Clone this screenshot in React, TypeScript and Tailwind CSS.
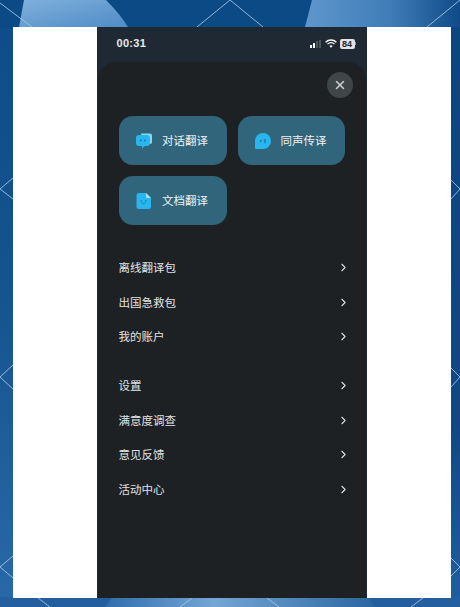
import { ChevronRight, X } from 'lucide-react';

const GROUP_ONE = ['离线翻译包', '出国急救包', '我的账户'];
const GROUP_TWO = ['设置', '满意度调查', '意见反馈', '活动中心'];

function Backdrop() {
  return (
    <svg className="absolute inset-0" width="460" height="607" viewBox="0 0 460 607">
      <defs>
        <linearGradient id="patchLeft" x1="0" y1="0" x2="1" y2="1">
          <stop offset="0" stopColor="#7fb0dc" />
          <stop offset="1" stopColor="#4f8cc6" />
        </linearGradient>
        <linearGradient id="patchRight" x1="0" y1="0" x2="1" y2="0">
          <stop offset="0" stopColor="#5f97cc" />
          <stop offset="0.55" stopColor="#3f7cb8" />
          <stop offset="1" stopColor="#0f4b88" />
        </linearGradient>
        <linearGradient id="patchBottom" x1="0" y1="0" x2="1" y2="0">
          <stop offset="0" stopColor="#2f6dab" />
          <stop offset="0.4" stopColor="#74a6d6" />
          <stop offset="1" stopColor="#2a659f" />
        </linearGradient>
        <linearGradient id="stripLeft" x1="0" y1="0" x2="0" y2="1">
          <stop offset="0" stopColor="#0f4b8a" />
          <stop offset="0.5" stopColor="#15548f" />
          <stop offset="1" stopColor="#2a69a8" />
        </linearGradient>
        <linearGradient id="stripRight" x1="0" y1="0" x2="0" y2="1">
          <stop offset="0" stopColor="#0c4580" />
          <stop offset="0.7" stopColor="#0e4985" />
          <stop offset="1" stopColor="#205f9e" />
        </linearGradient>
      </defs>
      <rect width="230" height="607" fill="url(#stripLeft)" />
      <rect x="230" width="230" height="607" fill="url(#stripRight)" />
      <rect width="460" height="28" fill="#0c4a86" />
      <path d="M24 0 L106 0 Q120 14 128 27 L19 27 Z" fill="url(#patchLeft)" />
      <path d="M312 0 L460 0 L460 27 L305 27 Z" fill="url(#patchRight)" />
      <rect y="597" width="460" height="10" fill="#235f9e" />
      <path d="M105 607 L112 598 L368 598 L376 607 Z" fill="url(#patchBottom)" />
      <g stroke="#a9c8e8" strokeWidth="1" fill="none" opacity="0.85">
        <path d="M0 3 L32 27" />
        <path d="M197 27 L230 0 L263 27" />
        <path d="M427 27 L460 0" />
        <path d="M13 178 L0 189 L13 199" />
        <path d="M13 365 L0 377 L13 389" />
        <path d="M13 556 L0 567 L13 578" />
        <path d="M451 180 L460 189 L451 199" />
        <path d="M451 368 L460 377 L451 387" />
        <path d="M451 558 L460 567 L451 576" />
        <path d="M38 598 L50 607" />
        <path d="M180 607 L192 598" />
        <path d="M267 598 L279 607" />
        <path d="M411 607 L423 598" />
      </g>
    </svg>
  );
}

function ChatIcon() {
  return (
    <svg width="18" height="18" viewBox="0 0 18 18">
      <path d="M6 1.5 H15 a2 2 0 0 1 2 2 V10 a2 2 0 0 1 -2 2 H8 Z" fill="#7fdcf5" />
      <path d="M4 3 H12 a3 3 0 0 1 3 3 V11 a3 3 0 0 1 -3 3 H9.5 L7 16.8 V14 H4 a3 3 0 0 1 -3 -3 V6 a3 3 0 0 1 3 -3 Z" fill="#29b6ee" />
      <circle cx="5.8" cy="8.5" r="0.9" fill="#1d6f9a" />
      <circle cx="10" cy="8.5" r="0.9" fill="#1d6f9a" />
    </svg>
  );
}

function VoiceIcon() {
  return (
    <svg width="18" height="18" viewBox="0 0 18 18">
      <path d="M9 1 a8 8 0 0 1 0 16 H2.2 a1.2 1.2 0 0 1 -1.2 -1.2 V9 a8 8 0 0 1 8 -8 Z" fill="#29b6ee" />
      <circle cx="6.8" cy="9" r="0.9" fill="#1d6f9a" />
      <rect x="10.4" y="6.8" width="1.2" height="4.4" rx="0.6" fill="#1d6f9a" />
    </svg>
  );
}

function DocIcon() {
  return (
    <svg width="16" height="18" viewBox="0 0 16 18">
      <path d="M3 1 H10 L15 6 V14.5 a2.5 2.5 0 0 1 -2.5 2.5 H3 a2.5 2.5 0 0 1 -2.5 -2.5 V3.5 a2.5 2.5 0 0 1 2.5 -2.5 Z" fill="#29b6ee" />
      <path d="M10 1 L15 6 H11.5 a1.5 1.5 0 0 1 -1.5 -1.5 Z" fill="#a4e6f8" />
      <circle cx="5.2" cy="9" r="0.8" fill="#1d6f9a" />
      <circle cx="9.8" cy="9" r="0.8" fill="#1d6f9a" />
      <path d="M5.6 11 Q7.5 12.6 9.4 11" stroke="#1d6f9a" strokeWidth="0.8" fill="none" />
    </svg>
  );
}

function StatusIcons() {
  return (
    <div className="flex items-center gap-[3px]">
      <div className="flex items-end gap-[1px] h-[8px]">
        <span className="w-[2px] h-[3px] bg-white" />
        <span className="w-[2px] h-[5px] bg-white" />
        <span className="w-[2px] h-[7px] bg-white/20" />
        <span className="w-[2px] h-[8px] bg-white/20" />
      </div>
      <svg width="12" height="9" viewBox="0 0 11 8" className="ml-[1px]">
        <path d="M0.6 2.8 a7 7 0 0 1 9.8 0" stroke="#fff" strokeWidth="1.3" fill="none" />
        <path d="M2.3 4.6 a4.6 4.6 0 0 1 6.4 0" stroke="#fff" strokeWidth="1.2" fill="none" />
        <path d="M4 6.3 a2.2 2.2 0 0 1 3 0 L5.5 7.9 Z" fill="#fff" />
      </svg>
      <div className="flex items-center">
        <span className="w-[15px] h-[10px] rounded-[2px] bg-[#e0e2e3] text-[#1f2933] text-[9px] leading-[10px] font-bold text-center font-['Liberation_Sans',sans-serif]">
          84
        </span>
        <span className="w-[1px] h-[3px] bg-white/50" />
      </div>
    </div>
  );
}

function FeatureButton({ icon, label }: { icon: React.ReactNode; label: string }) {
  return (
    <div className="h-[49px] rounded-[14px] bg-[#30657b] flex items-center justify-center gap-[9px] pr-[2px] text-[11.5px] text-[#eef2f3]">
      <span className="w-[18px] flex justify-center">{icon}</span>
      <span>{label}</span>
    </div>
  );
}

function MenuGroup({ items }: { items: string[] }) {
  return (
    <div>
      {items.map((item) => (
        <div key={item} className="h-[34.5px] flex items-center justify-between text-[11.5px] text-[#e0e3e5]">
          <span>{item}</span>
          <ChevronRight size={13} strokeWidth={2} className="text-[#d9dcde] mr-[-5px]" />
        </div>
      ))}
    </div>
  );
}

export default function App() {
  return (
    <div className="relative w-[460px] h-[607px] overflow-hidden font-['Noto_Sans_CJK_SC','Liberation_Sans',sans-serif]">
      <Backdrop />
      <div className="relative h-full pt-[27px] pb-[9px] px-[13px]">
        <div className="w-[438px] h-full bg-white flex justify-center pr-[1px]">
          <div className="w-[270px] h-full bg-[#1f2933] flex flex-col px-[1px]">
            <div className="h-[35px] shrink-0 pl-[19px] pr-[10px] pb-[2px] flex items-center justify-between">
              <span className="text-[11px] font-semibold tracking-[0.3px] text-[#e8eaec] font-['Liberation_Sans',sans-serif]">00:31</span>
              <StatusIcons />
            </div>
            <div className="flex-1 bg-[#1e2124] rounded-t-[18px] pl-[21px] pr-[21px]">
              <div className="flex justify-end pt-[10px]">
                <div className="w-[26px] h-[26px] mr-[-8px] rounded-full bg-[#404547] flex items-center justify-center">
                  <X size={14} strokeWidth={2.6} className="text-[#c9cdcf]" />
                </div>
              </div>
              <div className="mt-[18px] grid grid-cols-[108px_107px] gap-x-[11px] gap-y-[11px]">
                <FeatureButton icon={<ChatIcon />} label="对话翻译" />
                <FeatureButton icon={<VoiceIcon />} label="同声传译" />
                <FeatureButton icon={<DocIcon />} label="文档翻译" />
              </div>
              <div className="mt-[25.5px]">
                <MenuGroup items={GROUP_ONE} />
              </div>
              <div className="mt-[14.5px]">
                <MenuGroup items={GROUP_TWO} />
              </div>
            </div>
          </div>
        </div>
      </div>
    </div>
  );
}
